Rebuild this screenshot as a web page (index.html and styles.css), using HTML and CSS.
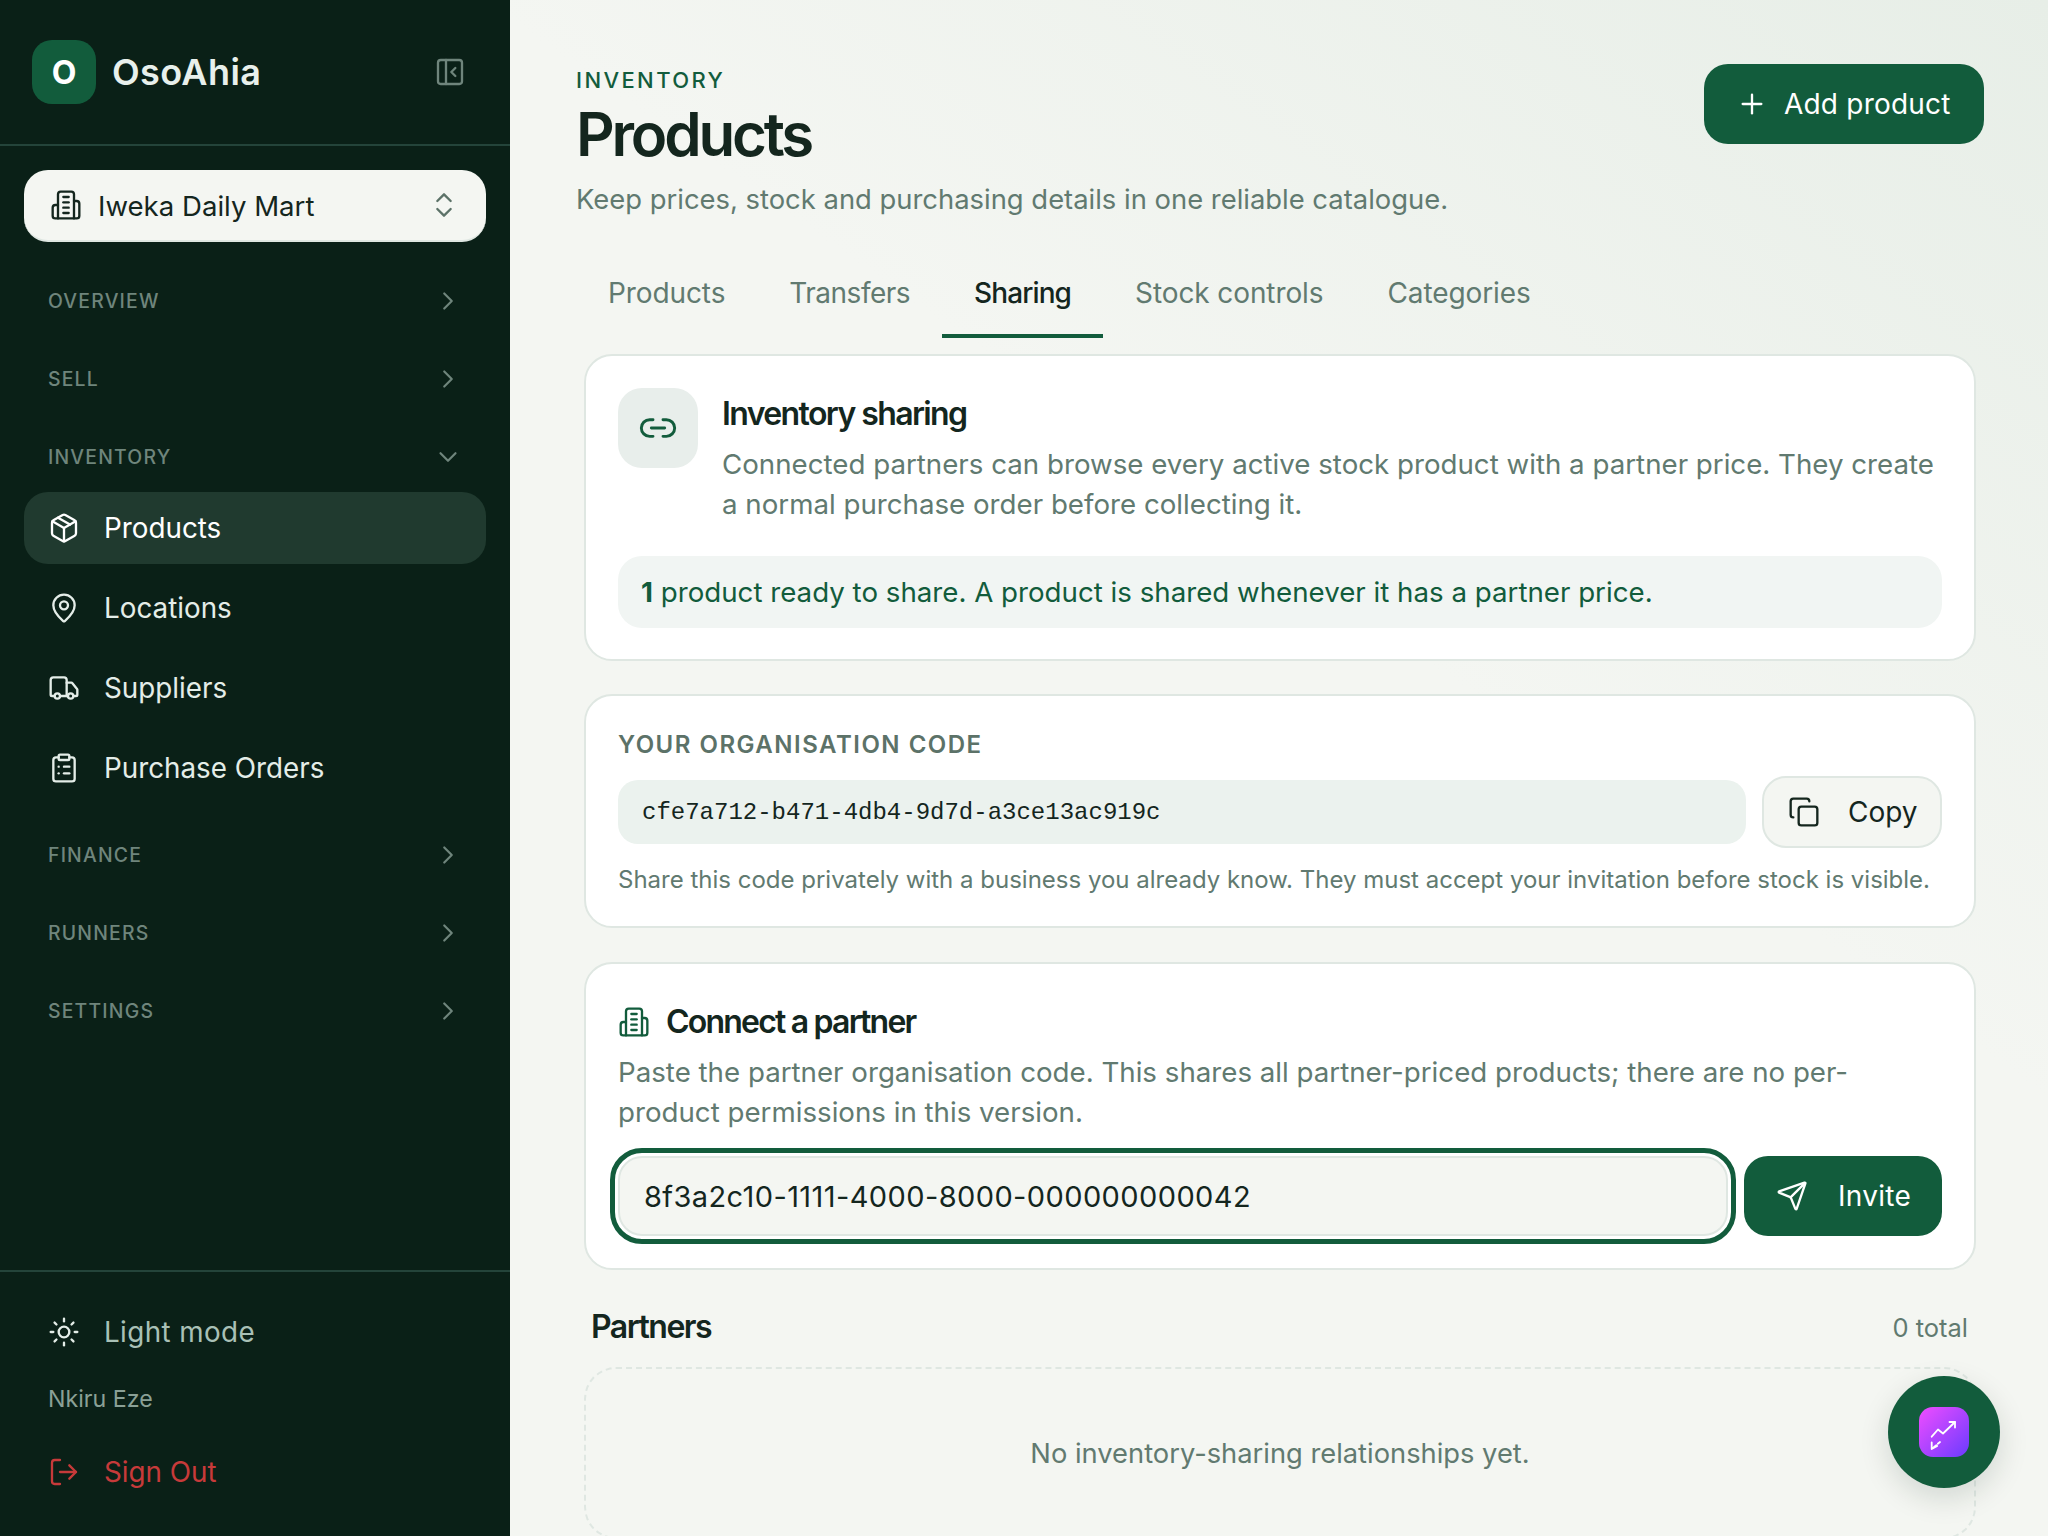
FILE: index.html
```html
<!DOCTYPE html>
<html lang="en">
<head>
    <meta charset="UTF-8">
    <meta name="viewport" content="width=device-width, initial-scale=1.0">
    <title>OsoAhia - Products</title>
    <link rel="stylesheet" href="styles.css">
</head>
<body>
    <div class="app">
        <aside class="sidebar">
            <div class="brand">
                <div class="brand-mark">O</div>
                <span class="brand-name">OsoAhia</span>
                <svg class="icon collapse-icon" viewBox="0 0 24 24"><rect x="3" y="3" width="18" height="18" rx="2"/><path d="M9 3v18"/><path d="m16 15-3-3 3-3"/></svg>
            </div>
            <button class="workspace">
                <svg class="icon workspace-icon" viewBox="0 0 24 24"><path d="M6 22V4a2 2 0 0 1 2-2h8a2 2 0 0 1 2 2v18Z"/><path d="M6 12H4a2 2 0 0 0-2 2v6a2 2 0 0 0 2 2h2"/><path d="M18 9h2a2 2 0 0 1 2 2v9a2 2 0 0 1-2 2h-2"/><path d="M10 6h4"/><path d="M10 10h4"/><path d="M10 14h4"/><path d="M10 18h4"/></svg>
                <span class="workspace-name">Iweka Daily Mart</span>
                <svg class="icon updown-icon" viewBox="0 0 24 24"><path d="m7 15 5 5 5-5"/><path d="m7 9 5-5 5 5"/></svg>
            </button>
            <nav class="nav">
                <div class="nav-head"><span>OVERVIEW</span><svg class="icon chevron" viewBox="0 0 24 24"><path d="m9 18 6-6-6-6"/></svg></div>
                <div class="nav-head"><span>SELL</span><svg class="icon chevron" viewBox="0 0 24 24"><path d="m9 18 6-6-6-6"/></svg></div>
                <div class="nav-head open"><span>INVENTORY</span><svg class="icon chevron" viewBox="0 0 24 24"><path d="m6 9 6 6 6-6"/></svg></div>
                <div class="nav-items">
                    <a class="nav-item active">
                        <svg class="icon" viewBox="0 0 24 24"><path d="M11 21.73a2 2 0 0 0 2 0l7-4A2 2 0 0 0 21 16V8a2 2 0 0 0-1-1.73l-7-4a2 2 0 0 0-2 0l-7 4A2 2 0 0 0 3 8v8a2 2 0 0 0 1 1.73z"/><path d="M12 22V12"/><path d="M3.29 7 12 12l8.71-5"/><path d="m7.5 4.27 9 5.15"/></svg>
                        Products
                    </a>
                    <a class="nav-item">
                        <svg class="icon" viewBox="0 0 24 24"><path d="M20 10c0 4.993-5.539 10.193-7.399 11.799a1 1 0 0 1-1.202 0C9.539 20.193 4 14.993 4 10a8 8 0 0 1 16 0"/><circle cx="12" cy="10" r="3"/></svg>
                        Locations
                    </a>
                    <a class="nav-item">
                        <svg class="icon" viewBox="0 0 24 24"><path d="M14 18V6a2 2 0 0 0-2-2H4a2 2 0 0 0-2 2v11a1 1 0 0 0 1 1h2"/><path d="M15 18H9"/><path d="M19 18h2a1 1 0 0 0 1-1v-3.65a1 1 0 0 0-.22-.624l-3.48-4.35A1 1 0 0 0 17.52 8H14"/><circle cx="17" cy="18" r="2"/><circle cx="7" cy="18" r="2"/></svg>
                        Suppliers
                    </a>
                    <a class="nav-item">
                        <svg class="icon" viewBox="0 0 24 24"><rect x="8" y="2" width="8" height="4" rx="1"/><path d="M16 4h2a2 2 0 0 1 2 2v14a2 2 0 0 1-2 2H6a2 2 0 0 1-2-2V6a2 2 0 0 1 2-2h2"/><path d="M12 11h4"/><path d="M12 16h4"/><path d="M8 11h.01"/><path d="M8 16h.01"/></svg>
                        Purchase Orders
                    </a>
                </div>
                <div class="nav-head"><span>FINANCE</span><svg class="icon chevron" viewBox="0 0 24 24"><path d="m9 18 6-6-6-6"/></svg></div>
                <div class="nav-head"><span>RUNNERS</span><svg class="icon chevron" viewBox="0 0 24 24"><path d="m9 18 6-6-6-6"/></svg></div>
                <div class="nav-head"><span>SETTINGS</span><svg class="icon chevron" viewBox="0 0 24 24"><path d="m9 18 6-6-6-6"/></svg></div>
            </nav>
            <div class="sidebar-foot">
                <a class="nav-item mode">
                    <svg class="icon" viewBox="0 0 24 24"><circle cx="12" cy="12" r="4"/><path d="M12 2v2"/><path d="M12 20v2"/><path d="m4.93 4.93 1.41 1.41"/><path d="m17.66 17.66 1.41 1.41"/><path d="M2 12h2"/><path d="M20 12h2"/><path d="m6.34 17.66-1.41 1.41"/><path d="m19.07 4.93-1.41 1.41"/></svg>
                    Light mode
                </a>
                <div class="user-name">Nkiru Eze</div>
                <a class="nav-item sign-out">
                    <svg class="icon" viewBox="0 0 24 24"><path d="M9 21H5a2 2 0 0 1-2-2V5a2 2 0 0 1 2-2h4"/><path d="m16 17 5-5-5-5"/><path d="M21 12H9"/></svg>
                    Sign Out
                </a>
            </div>
        </aside>

        <main class="main">
            <header class="page-head">
                <div>
                    <div class="eyebrow">INVENTORY</div>
                    <h1>Products</h1>
                    <p class="subtitle">Keep prices, stock and purchasing details in one reliable catalogue.</p>
                </div>
                <button class="btn btn-primary add-btn">
                    <svg class="icon" viewBox="0 0 24 24"><path d="M5 12h14"/><path d="M12 5v14"/></svg>
                    Add product
                </button>
            </header>

            <div class="tabs">
                <a class="tab">Products</a>
                <a class="tab tab-narrow">Transfers</a>
                <a class="tab active">Sharing</a>
                <a class="tab">Stock controls</a>
                <a class="tab">Categories</a>
            </div>

            <section class="card intro-card">
                <div class="intro">
                    <div class="intro-icon">
                        <svg class="icon" viewBox="0 0 24 24"><path d="M9 17H7A5 5 0 0 1 7 7h2"/><path d="M15 7h2a5 5 0 1 1 0 10h-2"/><path d="M8 12h8"/></svg>
                    </div>
                    <div class="intro-body">
                        <h2>Inventory sharing</h2>
                        <p class="card-text">Connected partners can browse every active stock product with a partner price. They create a normal purchase order before collecting it.</p>
                    </div>
                </div>
                <div class="notice"><strong>1</strong> product ready to share. A product is shared whenever it has a partner price.</div>
            </section>

            <section class="card code-card">
                <div class="field-label">YOUR ORGANISATION CODE</div>
                <div class="code-row">
                    <code class="code-value">cfe7a712-b471-4db4-9d7d-a3ce13ac919c</code>
                    <button class="btn btn-light">
                        <svg class="icon" viewBox="0 0 24 24"><rect x="8" y="8" width="14" height="14" rx="2"/><path d="M4 16c-1.1 0-2-.9-2-2V4c0-1.1.9-2 2-2h10c1.1 0 2 .9 2 2"/></svg>
                        Copy
                    </button>
                </div>
                <p class="hint">Share this code privately with a business you already know. They must accept your invitation before stock is visible.</p>
            </section>

            <section class="card connect-card">
                <div class="connect-title">
                    <svg class="icon" viewBox="0 0 24 24"><path d="M6 22V4a2 2 0 0 1 2-2h8a2 2 0 0 1 2 2v18Z"/><path d="M6 12H4a2 2 0 0 0-2 2v6a2 2 0 0 0 2 2h2"/><path d="M18 9h2a2 2 0 0 1 2 2v9a2 2 0 0 1-2 2h-2"/><path d="M10 6h4"/><path d="M10 10h4"/><path d="M10 14h4"/><path d="M10 18h4"/></svg>
                    <h2>Connect a partner</h2>
                </div>
                <p class="card-text connect-text">Paste the partner organisation code. This shares all partner-priced products; there are no per-product permissions in this version.</p>
                <div class="invite-row">
                    <input class="code-input" type="text" value="8f3a2c10-1111-4000-8000-000000000042">
                    <button class="btn btn-primary invite-btn">
                        <svg class="icon" viewBox="0 0 24 24"><path d="M14.536 21.686a.5.5 0 0 0 .937-.024l6.5-19a.496.496 0 0 0-.635-.635l-19 6.5a.5.5 0 0 0-.024.937l7.93 3.18a2 2 0 0 1 1.112 1.11z"/><path d="m21.854 2.147-10.94 10.939"/></svg>
                        Invite
                    </button>
                </div>
            </section>

            <div class="partners-head">
                <h2>Partners</h2>
                <span class="partners-count">0 total</span>
            </div>
            <div class="empty">No inventory-sharing relationships yet.</div>
        </main>

        <button class="fab">
            <span class="fab-badge">
                <svg viewBox="0 0 50 50"><path d="M12.700 29.700 19 22.500l5 4L36 15"/><path d="M30.500 15H36v5.500"/><path d="M15 40l6-5" stroke-dasharray="3 2"/><path d="M12.700 35.500v6.500l5.500-3"/></svg>
            </span>
        </button>
    </div>
</body>
</html>
```
FILE: styles.css
```css
* {
    box-sizing: border-box;
}
html, body {
    margin: 0;
    height: 100%;
    overflow: hidden;
}
body {
    font-family: Inter, "Noto Sans", sans-serif;
    color: #14261e;
}
h1, h2, p {
    margin: 0;
}
button {
    font-family: inherit;
    cursor: pointer;
    white-space: nowrap;
}
.icon {
    width: 32px;
    height: 32px;
    flex: none;
    fill: none;
    stroke: currentColor;
    stroke-width: 1.75;
    stroke-linecap: round;
    stroke-linejoin: round;
}
.app {
    display: flex;
    height: 1536px;
    position: relative;
    overflow: hidden;
}

/* sidebar */
.sidebar {
    width: 510px;
    flex: none;
    height: 100%;
    background: #0a2017;
    display: flex;
    flex-direction: column;
}
.brand {
    height: 146px;
    padding: 0 44px 0 32px;
    display: flex;
    align-items: center;
    border-bottom: 2px solid #24443a;
}
.brand-mark {
    width: 64px;
    height: 64px;
    border-radius: 20px;
    background: #125c3c;
    color: #fff;
    font-size: 32px;
    font-weight: 700;
    display: flex;
    align-items: center;
    justify-content: center;
}
.brand-name {
    margin-left: 16px;
    font-size: 36px;
    font-weight: 600;
    color: #e8f0ec;
    flex: 1;
    letter-spacing: 0.400px;
}
.collapse-icon {
    color: #6f857c;
}
.workspace {
    margin: 24px 24px 0;
    height: 72px;
    border: 0;
    border-bottom: 2px solid #dfe7e2;
    border-radius: 24px;
    background: #f4f6f2;
    color: #14261e;
    display: flex;
    align-items: center;
    padding: 0 26px 0 26px;
}
.workspace-icon {
    width: 32px;
    height: 32px;
    color: #14261e;
}
.workspace-name {
    margin-left: 16px;
    font-size: 27.600px;
    padding-top: 2px;
    flex: 1;
    text-align: left;
}
.updown-icon {
    width: 32px;
    height: 32px;
    color: #5c7268;
}
.nav {
    padding: 35px 24px 0;
}
.nav-head {
    height: 48px;
    margin-bottom: 30px;
    padding: 0 24px;
    display: flex;
    justify-content: space-between;
    align-items: center;
    font-size: 19.400px;
    font-weight: 500;
    letter-spacing: 1.200px;
    color: #6f857c;
}
.nav-head.open {
    margin-bottom: 11px;
}
.chevron {
    width: 30px;
    height: 30px;
    margin-right: -1px;
}
.nav-items {
    display: flex;
    flex-direction: column;
    gap: 8px;
    margin-bottom: 27px;
}
.nav-item {
    height: 72px;
    padding: 0 24px;
    border-radius: 24px;
    display: flex;
    align-items: center;
    gap: 24px;
    font-size: 27.800px;
    color: #e4ede8;
}
.nav-item.active {
    background: #203a2f;
    color: #fff;
}
.sidebar-foot {
    margin-top: auto;
    border-top: 2px solid #24443a;
    padding: 24px 24px 28px;
}
.mode {
    color: #a9c0b6;
    letter-spacing: 0.400px;
}
.mode .icon {
    color: #e4ede8;
}
.user-name {
    height: 68px;
    padding: 0 24px 6px;
    display: flex;
    align-items: center;
    font-size: 23.200px;
    color: #8aa096;
}
.sign-out {
    color: #c73a3a;
}

/* main */
.main {
    flex: 1;
    min-width: 0;
    padding: 64px 64px 0 66px;
    background: linear-gradient(215deg, #e7eee7 0%, #f4f6f2 42%);
}
.page-head {
    display: flex;
    justify-content: space-between;
    align-items: flex-start;
}
.eyebrow {
    font-size: 22px;
    line-height: 32px;
    font-weight: 500;
    letter-spacing: 2.400px;
    color: #125c3c;
}
h1 {
    font-size: 60px;
    line-height: 72px;
    margin-top: 2px;
    font-weight: 600;
    letter-spacing: -3.200px;
    color: #14261e;
}
.subtitle {
    margin-top: 9px;
    font-size: 27.400px;
    line-height: 40px;
    color: #617a70;
}
.btn {
    border-radius: 24px;
    display: flex;
    align-items: center;
    border: 0;
    font-size: 28px;
}
.btn-primary {
    background: #125c3c;
    color: #fff;
}
.btn-light {
    background: #f4f6f2;
    border: 2px solid #dfe7e2;
    color: #14261e;
    width: 180px;
    height: 72px;
    padding: 0 24px;
    gap: 28px;
}
.add-btn {
    width: 280px;
    height: 80px;
    padding: 0 32px;
    gap: 16px;
    letter-spacing: 0.200px;
}
.tabs {
    margin-top: 29px;
    display: flex;
    height: 90px;
}
.tab {
    padding: 4px 32px 0;
    display: flex;
    align-items: center;
    font-size: 28px;
    letter-spacing: -0.100px;
    color: #617a70;
    border-bottom: 4px solid transparent;
}
.tab-narrow {
    letter-spacing: -0.500px;
}
.tab.active {
    color: #14261e;
    font-weight: 500;
    letter-spacing: -0.900px;
    border-bottom-color: #125c3c;
}
.card {
    margin: 0 8px 34px;
    padding: 32px;
    background: #fff;
    border: 2px solid #dfe7e2;
    border-radius: 28px;
}
.intro-card {
    margin-top: 16px;
    margin-bottom: 33px;
    height: 307px;
}
.intro {
    display: flex;
    gap: 24px;
}
.intro-icon {
    width: 80px;
    height: 80px;
    flex: none;
    border-radius: 24px;
    background: #e8eeeb;
    color: #125c3c;
    display: flex;
    align-items: center;
    justify-content: center;
}
.intro-icon .icon {
    width: 40px;
    height: 40px;
}
.intro-body {
    padding-top: 4px;
}
h2 {
    font-size: 32px;
    line-height: 44px;
    font-weight: 600;
    letter-spacing: -1.600px;
    color: #14261e;
}
.card-text {
    margin-top: 8px;
    font-size: 27.700px;
    line-height: 40px;
    color: #617a70;
}
.notice {
    margin-top: 32px;
    height: 72px;
    padding: 0 23px;
    display: flex;
    align-items: center;
    white-space: pre;
    border-radius: 24px;
    background: #f1f5f3;
    font-size: 27.700px;
    color: #125c3c;
}
.notice strong {
    font-weight: 700;
}
.code-card {
    height: 234px;
    padding-top: 33px;
}
.field-label {
    font-size: 24px;
    line-height: 32px;
    font-weight: 600;
    letter-spacing: 1.500px;
    color: #5c7268;
}
.code-row {
    margin-top: 15px;
    display: flex;
    align-items: center;
    gap: 16px;
}
.code-value {
    flex: 1;
    height: 64px;
    padding: 0 24px;
    border-radius: 20px;
    background: #ebf2ee;
    display: flex;
    align-items: center;
    font-family: "Liberation Mono", monospace;
    font-size: 24px;
    color: #14261e;
}
.hint {
    margin-top: 14px;
    font-size: 24px;
    line-height: 36px;
    color: #617a70;
}
.connect-card {
    height: 308px;
    margin-bottom: 35px;
}
.connect-title {
    display: flex;
    align-items: center;
    gap: 16px;
    color: #125c3c;
    margin-top: 4px;
}
.connect-title h2 {
    letter-spacing: -1.800px;
}
.connect-title .icon {
    width: 32px;
    height: 32px;
}
.connect-text {
    margin-top: 8px;
}
.invite-row {
    margin-top: 24px;
    display: flex;
    gap: 16px;
}
.code-input {
    flex: 1;
    min-width: 0;
    height: 80px;
    padding: 0 24px;
    font-family: inherit;
    font-size: 29px;
    letter-spacing: 0.400px;
    color: #14261e;
    background: #f4f6f2;
    border: 2px solid #dfe7e2;
    border-radius: 24px;
    outline: 5px solid #125c3c;
    outline-offset: 3px;
}
.invite-btn {
    width: 198px;
    height: 80px;
    padding: 0 32px;
    gap: 30px;
    letter-spacing: 0.300px;
}
.partners-head {
    display: flex;
    justify-content: space-between;
    align-items: center;
    margin: 0 16px 0 15px;
    height: 44px;
}
.partners-head h2 {
    letter-spacing: -1.500px;
}
.partners-count {
    font-size: 25.500px;
    color: #617a70;
}
.empty {
    margin: 18px 8px 0;
    height: 172px;
    border: 2px dashed #dfe7e2;
    border-radius: 32px;
    display: flex;
    align-items: center;
    justify-content: center;
    font-size: 27.300px;
    color: #617a70;
}
.fab {
    position: absolute;
    left: 1888px;
    top: 1376px;
    width: 112px;
    height: 112px;
    border: 0;
    border-radius: 50%;
    background: #125c3c;
    box-shadow: 0 10px 30px rgba(10, 32, 23, 0.14);
    display: flex;
    align-items: center;
    justify-content: center;
    padding: 0;
}
.fab-badge {
    width: 50px;
    height: 50px;
    border-radius: 14px;
    background: linear-gradient(135deg, #f04dff, #6a3bff);
    display: block;
}
.fab-badge svg {
    display: block;
    width: 50px;
    height: 50px;
    fill: none;
    stroke: #fff;
    stroke-width: 1.800;
    stroke-linecap: round;
    stroke-linejoin: round;
}
```
